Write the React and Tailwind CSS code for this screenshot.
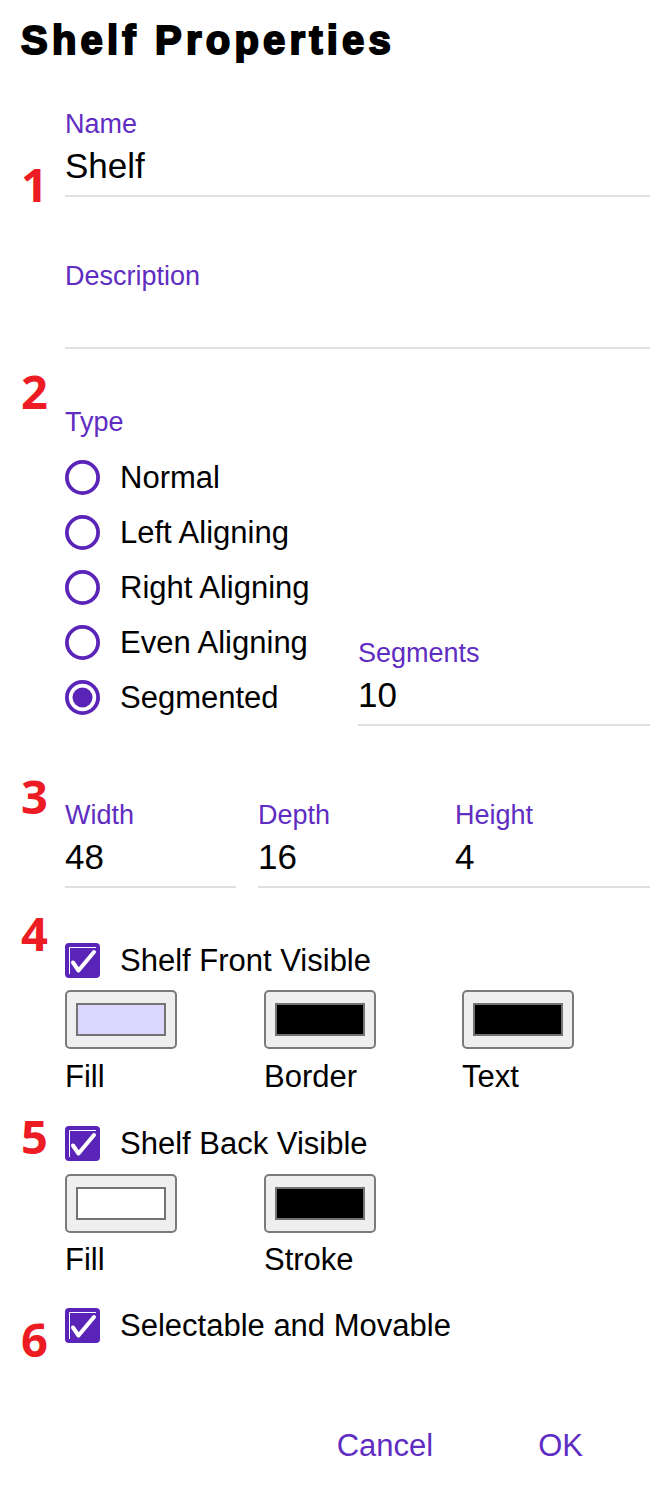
import { useState } from "react";

const PURPLE = "#5b24b9";

// label + value + underline, the Material-style text input of the dialog
const Field = ({ label, value, className = "" }) => (
  <div className={`flex flex-col ${className}`}>
    <span className="text-[27px] leading-none text-[#5f2dc2]">{label}</span>
    <span className="mt-[10px] h-[35px] text-[35px] leading-none text-black">{value}</span>
    <div className="mt-[12px] h-[2px] bg-[#e0e0e0]" />
  </div>
);

const Radio = ({ checked }) => (
  <svg width="35" height="35" viewBox="0 0 35 35" className="shrink-0">
    <circle cx="17.5" cy="17.5" r="15.6" fill="none" stroke={PURPLE} strokeWidth="3.8" />
    {checked && <circle cx="17.5" cy="17.5" r="10" fill={PURPLE} />}
  </svg>
);

const Checkbox = () => (
  <svg width="35" height="35" viewBox="0 0 35 35" className="shrink-0">
    <rect x="0" y="0" width="35" height="35" rx="4" fill={PURPLE} />
    <path d="M4.5 31V4.5H31" fill="none" stroke="#fff" strokeWidth="1" />
    <path d="M8 19.5L13.5 27.5L29 9" fill="none" stroke="#fff" strokeWidth="4" strokeLinecap="round" strokeLinejoin="round" />
  </svg>
);

const Swatch = ({ color }) => (
  <div className="flex h-[59px] w-[112px] items-center justify-center rounded-[5px] border-2 border-[#7b7b7b] bg-[#efefef]">
    <div className="h-[33px] w-[90px] border-2 border-[#737373]" style={{ backgroundColor: color }} />
  </div>
);

const CheckRow = ({ label }) => (
  <div className="flex h-[35px] items-center gap-[20px]">
    <Checkbox />
    <span className="text-[31px] leading-none text-black">{label}</span>
  </div>
);

const Marker = ({ n, top }) => (
  <span
    className="absolute left-[21px] font-['Open_Sans',sans-serif] text-[47px] font-bold leading-none tracking-[-2px] text-[#ed1c24]"
    style={{ top }}
  >
    {n}
  </span>
);

export default function App() {
  const [type, setType] = useState("Segmented");
  const types = ["Normal", "Left Aligning", "Right Aligning", "Even Aligning", "Segmented"];

  return (
    <div className="relative min-h-[1491px] w-[669px] bg-white font-['Liberation_Sans',Arial,sans-serif]">
      <h1 className="pl-[21px] pt-[20px] text-[40px] font-bold leading-none tracking-[4.2px] text-black [-webkit-text-stroke:2px_black]">
        Shelf Properties
      </h1>

      <div className="pl-[65px] pr-[19px]">
        <Field label="Name" value="Shelf" className="mt-[51px]" />
        <Field label="Description" value="" className="mt-[66px]" />

        <div className="mt-[60px] text-[27px] leading-none text-[#5f2dc2]">Type</div>
        <div className="mt-[14px] flex items-end">
          <div className="flex w-[293px] flex-col">
            {types.map((t) => (
              <button
                key={t}
                type="button"
                onClick={() => setType(t)}
                className="flex h-[55px] items-center gap-[20px] text-left"
              >
                <Radio checked={type === t} />
                <span className="text-[31px] leading-none text-black">{t}</span>
              </button>
            ))}
          </div>
          <Field label="Segments" value="10" className="mb-[-1px] flex-1" />
        </div>

        <div className="mt-[77px] flex">
          <Field label="Width" value="48" className="w-[171px]" />
          <Field label="Depth" value="16" className="ml-[22px] w-[197px]" />
          <Field label="Height" value="4" className="flex-1" />
        </div>

        <div className="mt-[55px]">
          <CheckRow label="Shelf Front Visible" />
        </div>
        <div className="mt-[12px] flex">
          <div className="w-[199px]"><Swatch color="#dcd7fe" /></div>
          <div className="w-[198px]"><Swatch color="#000000" /></div>
          <div><Swatch color="#000000" /></div>
        </div>
        <div className="mt-[12px] flex text-[31px] leading-none text-black">
          <span className="w-[199px]">Fill</span>
          <span className="w-[198px]">Border</span>
          <span>Text</span>
        </div>

        <div className="mt-[34px]">
          <CheckRow label="Shelf Back Visible" />
        </div>
        <div className="mt-[13px] flex">
          <div className="w-[199px]"><Swatch color="#ffffff" /></div>
          <div><Swatch color="#000000" /></div>
        </div>
        <div className="mt-[11px] flex text-[31px] leading-none text-black">
          <span className="w-[199px]">Fill</span>
          <span>Stroke</span>
        </div>

        <div className="mt-[33px]">
          <CheckRow label="Selectable and Movable" />
        </div>
      </div>

      <div className="mt-[87px] flex justify-end gap-[105px] pr-[86px] text-[31px] leading-none text-[#5f2dc2]">
        <button type="button">Cancel</button>
        <button type="button">OK</button>
      </div>

      {/* red step markers drawn over the dialog */}
      <Marker n="1" top={161} />
      <Marker n="2" top={368} />
      <Marker n="3" top={773} />
      <Marker n="4" top={910} />
      <Marker n="5" top={1113} />
      <Marker n="6" top={1316} />
    </div>
  );
}
